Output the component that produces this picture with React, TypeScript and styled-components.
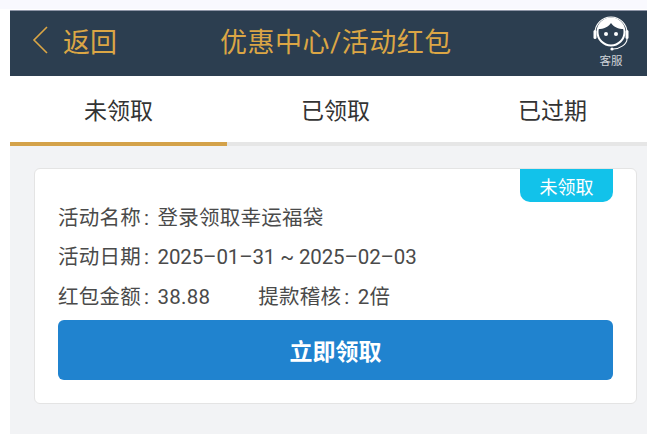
import styled, { createGlobalStyle } from "styled-components";

const Global = createGlobalStyle`
  html, body {
    margin: 0;
    padding: 0;
    background: #fff;
  }
  * {
    box-sizing: border-box;
  }
`;

const Page = styled.div`
  width: 647px;
  height: 434px;
  padding: 10px 0 0 10px;
  overflow: hidden;
  background: linear-gradient(#f9f9fe 0, #f9f9fe 9px, #fff 9px);
  font-family: "Roboto", "Noto Sans CJK SC", sans-serif;
`;

const Header = styled.header`
  height: 66px;
  background: #2c3e50;
  border-top: 1px solid #8f96a8;
  display: grid;
  grid-template-columns: 188px auto 1fr;
  align-items: center;
  padding: 0 17px 7px 22px;
  color: #dba645;
`;

const Back = styled.div`
  display: flex;
  align-items: center;
  gap: 15px;
  font-size: 27px;
`;

const Title = styled.h1`
  margin: 0;
  font-size: 27px;
  font-weight: 400;
  letter-spacing: 0.5px;
`;

const Service = styled.div`
  justify-self: end;
  display: flex;
  flex-direction: column;
  align-items: center;
  gap: 2px;
  color: #cfd3d8;
  font-size: 11.5px;
  line-height: 12px;
`;

const HeadsetIcon = styled.svg`
  display: block;
`;

const Tabs = styled.nav`
  display: grid;
  grid-template-columns: repeat(3, 217px);
  height: 70px;
  background: #fff;
  border-bottom: 4px solid #e6e6e6;
`;

const Tab = styled.div<{ $active?: boolean }>`
  display: flex;
  align-items: center;
  justify-content: center;
  height: 70px;
  font-size: 23px;
  color: #333;
  border-bottom: 4px solid ${(p) => (p.$active ? "#d4a24a" : "transparent")};
`;

const Body = styled.main`
  height: 288px;
  background: #f2f3f5;
  padding: 22px 10px 0 24px;
`;

const Card = styled.section`
  position: relative;
  height: 236px;
  background: #fff;
  border: 1px solid #e4e4e4;
  border-radius: 6px;
  padding: 27px 23px 0;
`;

const Badge = styled.span`
  position: absolute;
  top: 0;
  right: 23px;
  width: 93px;
  height: 33px;
  display: flex;
  align-items: center;
  justify-content: center;
  background: #12c2ea;
  border-radius: 0 0 10px 10px;
  color: #fff;
  font-size: 18px;
`;

const Row = styled.div`
  display: flex;
  gap: 48px;
  height: 39.5px;
  align-items: center;
  font-size: 20.5px;
  color: #4a4a4a;
  letter-spacing: 0.25px;
  white-space: pre;
`;

const Field = styled.span``;

const Colon = styled.span`
  margin: 0 3px;
`;

const DateValue = styled.span`
  letter-spacing: -0.14px;
`;

const Claim = styled.button`
  display: block;
  width: 100%;
  height: 60px;
  margin-top: 5px;
  border: 0;
  border-radius: 6px;
  background: #2083cf;
  color: #fff;
  font-family: inherit;
  font-size: 23px;
  font-weight: 700;
`;

function Headset() {
  return (
    <HeadsetIcon width="38" height="40" viewBox="0 0 38 40" fill="none">
      <path d="M3 20a16 16 0 0 1 32 0" stroke="#fff" strokeWidth="1.1" />
      <circle cx="19" cy="19" r="13.5" stroke="#fff" strokeWidth="2" />
      <path d="M6 16c6 0 10-2 13-6 3 4 7 6 13 6-1-6-6-11-13-11S7 10 6 16z" fill="#fff" />
      <circle cx="14" cy="21" r="2" fill="#fff" />
      <circle cx="24" cy="21" r="2" fill="#fff" />
      <rect x="1.5" y="17" width="3" height="9" rx="1.5" fill="#fff" />
      <rect x="33.5" y="17" width="3" height="9" rx="1.5" fill="#fff" />
      <path d="M35 26c0 5-7 10-14 10" stroke="#fff" strokeWidth="1.1" />
      <circle cx="20" cy="36" r="1.6" fill="#fff" />
    </HeadsetIcon>
  );
}

export default function App() {
  return (
    <Page>
      <Global />
      <Header>
        <Back>
          <svg width="16" height="28" viewBox="0 0 16 28" fill="none">
            <path d="M15 1 2 14l13 13" stroke="#dba645" strokeWidth="1.6" />
          </svg>
          返回
        </Back>
        <Title>优惠中心/活动红包</Title>
        <Service>
          <Headset />
          客服
        </Service>
      </Header>
      <Tabs>
        <Tab $active>未领取</Tab>
        <Tab>已领取</Tab>
        <Tab>已过期</Tab>
      </Tabs>
      <Body>
        <Card>
          <Badge>未领取</Badge>
          <Row>
            <Field>
              活动名称<Colon>:</Colon> 登录领取幸运福袋
            </Field>
          </Row>
          <Row>
            <Field>
              活动日期<Colon>:</Colon> <DateValue>2025–01–31 ~ 2025–02–03</DateValue>
            </Field>
          </Row>
          <Row>
            <Field>
              红包金额<Colon>:</Colon> 38.88
            </Field>
            <Field>
              提款稽核<Colon>:</Colon> 2倍
            </Field>
          </Row>
          <Claim>立即领取</Claim>
        </Card>
      </Body>
    </Page>
  );
}
